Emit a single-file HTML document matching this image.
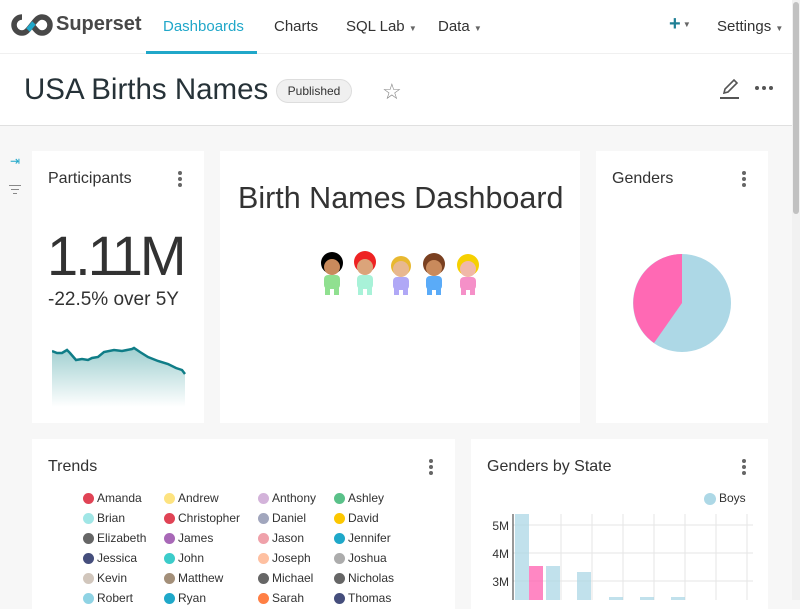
<!DOCTYPE html>
<html><head><style>
*{box-sizing:border-box;margin:0;padding:0}
body{width:800px;height:600px;overflow:hidden;font-family:"Liberation Sans",sans-serif;background:#f7f7f7;position:relative;color:#323232}
.abs{position:absolute}
.card{position:absolute;background:#fff}
.t{position:absolute;font-size:16px;color:#323232}
.dots{position:absolute;width:4px}
.dots i{display:block;width:4px;height:4px;border-radius:2px;background:#666;margin-bottom:2px}
.lg{position:absolute;font-size:12px;color:#323232}
.lg b{position:absolute;left:-14px;top:2px;width:11px;height:11px;border-radius:50%}
</style></head><body>
<div class="abs" style="left:0;top:0;width:792px;height:126px;background:#fff;border-bottom:1px solid #e0e0e0"></div>
<div class="abs" style="left:0;top:53px;width:792px;height:1px;background:#f0f0f0"></div>
<svg class="abs" style="left:10px;top:14px" width="44" height="22" viewBox="0 0 44 22"><path d="M12 3a8 8 0 1 0 0 16c4 0 6-3 10-8s6-8 10-8a8 8 0 1 1 0 16c-4 0-6-3-10-8" fill="none" stroke="#484848" stroke-width="5.5"/><path d="M18 16c2-2 4-5 6-7" stroke="#20a7c9" stroke-width="5" fill="none"/></svg>
<div class="abs" style="left:56px;top:13px;font-size:20px;font-weight:bold;color:#484848">Superset</div>
<div class="abs" style="left:163px;top:18px;font-size:15px;color:#20a7c9">Dashboards</div>
<div class="abs" style="left:146px;top:51px;width:111px;height:3px;background:#20a7c9"></div>
<div class="abs" style="left:274px;top:18px;font-size:15px">Charts</div>
<div class="abs" style="left:346px;top:18px;font-size:15px">SQL Lab <span style="font-size:8px;color:#666">▼</span></div>
<div class="abs" style="left:438px;top:18px;font-size:15px">Data <span style="font-size:8px;color:#666">▼</span></div>
<div class="abs" style="left:669px;top:13px;font-size:20px;font-weight:bold;color:#1f7f95">+<span style="font-size:8px;color:#666;vertical-align:middle"> ▼</span></div>
<div class="abs" style="left:717px;top:18px;font-size:15px">Settings <span style="font-size:8px;color:#666">▼</span></div>
<div class="abs" style="left:792px;top:0;width:8px;height:600px;background:#f1f1f1"></div>
<div class="abs" style="left:793px;top:2px;width:6px;height:212px;background:#c1c1c1;border-radius:3px"></div>
<div class="abs" style="left:24px;top:73px;font-size:29.5px;color:#263238">USA Births Names</div>
<div class="abs" style="left:276px;top:79px;width:76px;height:24px;border:1px solid #ddd;border-radius:12px;background:#f0f0f0;font-size:12px;line-height:22px;text-align:center">Published</div>
<div class="abs" style="left:382px;top:79px;font-size:22px;color:#888">☆</div>
<svg class="abs" style="left:718px;top:78px" width="24" height="22" viewBox="0 0 24 22"><path d="M6 15l1-4L16 2l3 3-9 9z" fill="none" stroke="#555" stroke-width="1.6"/><path d="M2 20h19" stroke="#555" stroke-width="2"/></svg>
<div class="abs" style="left:755px;top:86px;width:20px;height:4px"><span class="abs" style="left:0;width:4px;height:4px;border-radius:2px;background:#555"></span><span class="abs" style="left:7px;width:4px;height:4px;border-radius:2px;background:#555"></span><span class="abs" style="left:14px;width:4px;height:4px;border-radius:2px;background:#555"></span></div>
<div class="abs" style="left:10px;top:154px;color:#20a7c9;font-size:12px">⇥</div>
<div class="abs" style="left:9px;top:184px;width:12px;height:12px"><div style="height:1px;background:#888;margin:1px 0 3px"></div><div style="height:1px;background:#888;margin:0 2px 3px"></div><div style="height:1px;background:#888;margin:0 4px"></div></div>
<div class="card" style="left:32px;top:151px;width:172px;height:272px"></div>
<div class="t" style="left:48px;top:170px">Participants</div>
<div class="dots" style="left:178px;top:171px"><i></i><i></i><i></i></div>
<div class="abs" style="left:47px;top:223px;font-size:56px;color:#323232;letter-spacing:-3px">1.11M</div>
<div class="abs" style="left:48px;top:289px;font-size:19px">-22.5% over 5Y</div>
<svg class="abs" style="left:52px;top:345px" width="134" height="62"><defs><linearGradient id="g" x1="0" y1="0" x2="0" y2="1"><stop offset="0" stop-color="#9fcfd0"/><stop offset="1" stop-color="#fff"/></linearGradient></defs><path d="M0 6 L5 8 L10 8 L15 5 L18 8 L24 15 L30 14 L36 15 L40 13 L46 12 L52 7 L62 5 L70 6 L80 4 L82 3 L88 7 L96 12 L106 16 L116 19 L124 23 L130 25 L133 29 L133 62 L0 62Z" fill="url(#g)"/><path d="M0 6 L5 8 L10 8 L15 5 L18 8 L24 15 L30 14 L36 15 L40 13 L46 12 L52 7 L62 5 L70 6 L80 4 L82 3 L88 7 L96 12 L106 16 L116 19 L124 23 L130 25 L133 29" fill="none" stroke="#0f7d87" stroke-width="2.5"/></svg>
<div class="card" style="left:220px;top:151px;width:360px;height:272px"></div>
<div class="abs" style="left:238px;top:181px;font-size:30.5px;color:#333">Birth Names Dashboard</div>
<svg class="abs" style="left:314px;top:244px" width="170" height="54">
<g><circle cx="18" cy="19" r="11" fill="#000"/><circle cx="18" cy="23" r="8" fill="#c98a5c"/><rect x="10" y="31" width="16" height="14" rx="4" fill="#90e090"/><rect x="11" y="43" width="5" height="8" fill="#90e090"/><rect x="20" y="43" width="5" height="8" fill="#90e090"/></g>
<g><circle cx="51" cy="18" r="11" fill="#e22"/><circle cx="51" cy="23" r="8" fill="#dba47a"/><rect x="43" y="31" width="16" height="14" rx="4" fill="#a8f2d8"/><rect x="44" y="43" width="5" height="8" fill="#a8f2d8"/><rect x="53" y="43" width="5" height="8" fill="#a8f2d8"/></g>
<g><circle cx="87" cy="22" r="10" fill="#e8b830"/><circle cx="87" cy="25" r="8" fill="#e8b890"/><rect x="79" y="33" width="16" height="13" rx="4" fill="#b0a8f6"/><rect x="80" y="44" width="5" height="7" fill="#b0a8f6"/><rect x="89" y="44" width="5" height="7" fill="#b0a8f6"/></g>
<g><circle cx="120" cy="20" r="11" fill="#7a4020"/><circle cx="120" cy="24" r="8" fill="#c98a5c"/><rect x="112" y="32" width="16" height="14" rx="4" fill="#5aabf8"/><rect x="113" y="44" width="5" height="7" fill="#5aabf8"/><rect x="122" y="44" width="5" height="7" fill="#5aabf8"/></g>
<g><circle cx="154" cy="21" r="11" fill="#f6d000"/><circle cx="154" cy="25" r="8" fill="#f0b8a8"/><rect x="146" y="33" width="16" height="13" rx="4" fill="#f590c8"/><rect x="147" y="44" width="5" height="7" fill="#f590c8"/><rect x="156" y="44" width="5" height="7" fill="#f590c8"/></g>
</svg>
<div class="card" style="left:596px;top:151px;width:172px;height:272px"></div>
<div class="t" style="left:612px;top:170px">Genders</div>
<div class="dots" style="left:742px;top:171px"><i></i><i></i><i></i></div>
<svg class="abs" style="left:632px;top:253px" width="100" height="100"><circle cx="50" cy="50" r="49" fill="#add8e6"/><path d="M50 50 L50 1 A49 49 0 0 0 22 90 Z" fill="#ff69b4"/></svg>
<div class="card" style="left:32px;top:439px;width:423px;height:170px"></div>
<div class="t" style="left:48px;top:458px">Trends</div>
<div class="dots" style="left:429px;top:459px"><i></i><i></i><i></i></div>
<div class="lg" style="left:97px;top:491px"><b style="background:#e04355"></b>Amanda</div>
<div class="lg" style="left:178px;top:491px"><b style="background:#fde380"></b>Andrew</div>
<div class="lg" style="left:272px;top:491px"><b style="background:#d3b3da"></b>Anthony</div>
<div class="lg" style="left:348px;top:491px"><b style="background:#5ac189"></b>Ashley</div>
<div class="lg" style="left:97px;top:511px"><b style="background:#a0e6e6"></b>Brian</div>
<div class="lg" style="left:178px;top:511px"><b style="background:#e04355"></b>Christopher</div>
<div class="lg" style="left:272px;top:511px"><b style="background:#a1a6bd"></b>Daniel</div>
<div class="lg" style="left:348px;top:511px"><b style="background:#fcc700"></b>David</div>
<div class="lg" style="left:97px;top:531px"><b style="background:#666"></b>Elizabeth</div>
<div class="lg" style="left:178px;top:531px"><b style="background:#a868b7"></b>James</div>
<div class="lg" style="left:272px;top:531px"><b style="background:#efa1aa"></b>Jason</div>
<div class="lg" style="left:348px;top:531px"><b style="background:#1fa8c9"></b>Jennifer</div>
<div class="lg" style="left:97px;top:551px"><b style="background:#454e7c"></b>Jessica</div>
<div class="lg" style="left:178px;top:551px"><b style="background:#3cccca"></b>John</div>
<div class="lg" style="left:272px;top:551px"><b style="background:#fec0a1"></b>Joseph</div>
<div class="lg" style="left:348px;top:551px"><b style="background:#acacac"></b>Joshua</div>
<div class="lg" style="left:97px;top:571px"><b style="background:#d1c6bc"></b>Kevin</div>
<div class="lg" style="left:178px;top:571px"><b style="background:#a38f79"></b>Matthew</div>
<div class="lg" style="left:272px;top:571px"><b style="background:#666"></b>Michael</div>
<div class="lg" style="left:348px;top:571px"><b style="background:#666"></b>Nicholas</div>
<div class="lg" style="left:97px;top:591px"><b style="background:#8fd3e4"></b>Robert</div>
<div class="lg" style="left:178px;top:591px"><b style="background:#1fa8c9"></b>Ryan</div>
<div class="lg" style="left:272px;top:591px"><b style="background:#ff7f44"></b>Sarah</div>
<div class="lg" style="left:348px;top:591px"><b style="background:#454e7c"></b>Thomas</div>
<div class="card" style="left:471px;top:439px;width:297px;height:170px"></div>
<div class="t" style="left:487px;top:458px">Genders by State</div>
<div class="dots" style="left:742px;top:459px"><i></i><i></i><i></i></div>
<div class="lg" style="left:719px;top:491px"><b style="background:#add8e6;width:12px;height:12px;left:-15px"></b>Boys</div>
<svg class="abs" style="left:471px;top:500px" width="297" height="100">
<g stroke="#e5e5e5" stroke-width="1"><line x1="42" y1="25" x2="282" y2="25"/><line x1="42" y1="53" x2="282" y2="53"/><line x1="42" y1="81" x2="282" y2="81"/>
<line x1="90" y1="14" x2="90" y2="100"/><line x1="121" y1="14" x2="121" y2="100"/><line x1="152" y1="14" x2="152" y2="100"/><line x1="183" y1="14" x2="183" y2="100"/><line x1="214" y1="14" x2="214" y2="100"/><line x1="245" y1="14" x2="245" y2="100"/><line x1="276" y1="14" x2="276" y2="100"/></g>
<line x1="42" y1="14" x2="42" y2="100" stroke="#333"/>
<g fill="#add8e6" opacity="0.75"><rect x="44" y="14" width="14" height="86"/><rect x="75" y="66" width="14" height="34"/><rect x="106" y="72" width="14" height="28"/><rect x="138" y="97" width="14" height="3"/><rect x="169" y="97" width="14" height="3"/><rect x="200" y="97" width="14" height="3"/></g>
<rect x="58" y="66" width="14" height="34" fill="#ff69b4" opacity="0.8"/>
<g font-size="12" fill="#333" text-anchor="end" font-family="Liberation Sans"><text x="38" y="30">5M</text><text x="38" y="58">4M</text><text x="38" y="86">3M</text></g>
</svg>
</body></html>
